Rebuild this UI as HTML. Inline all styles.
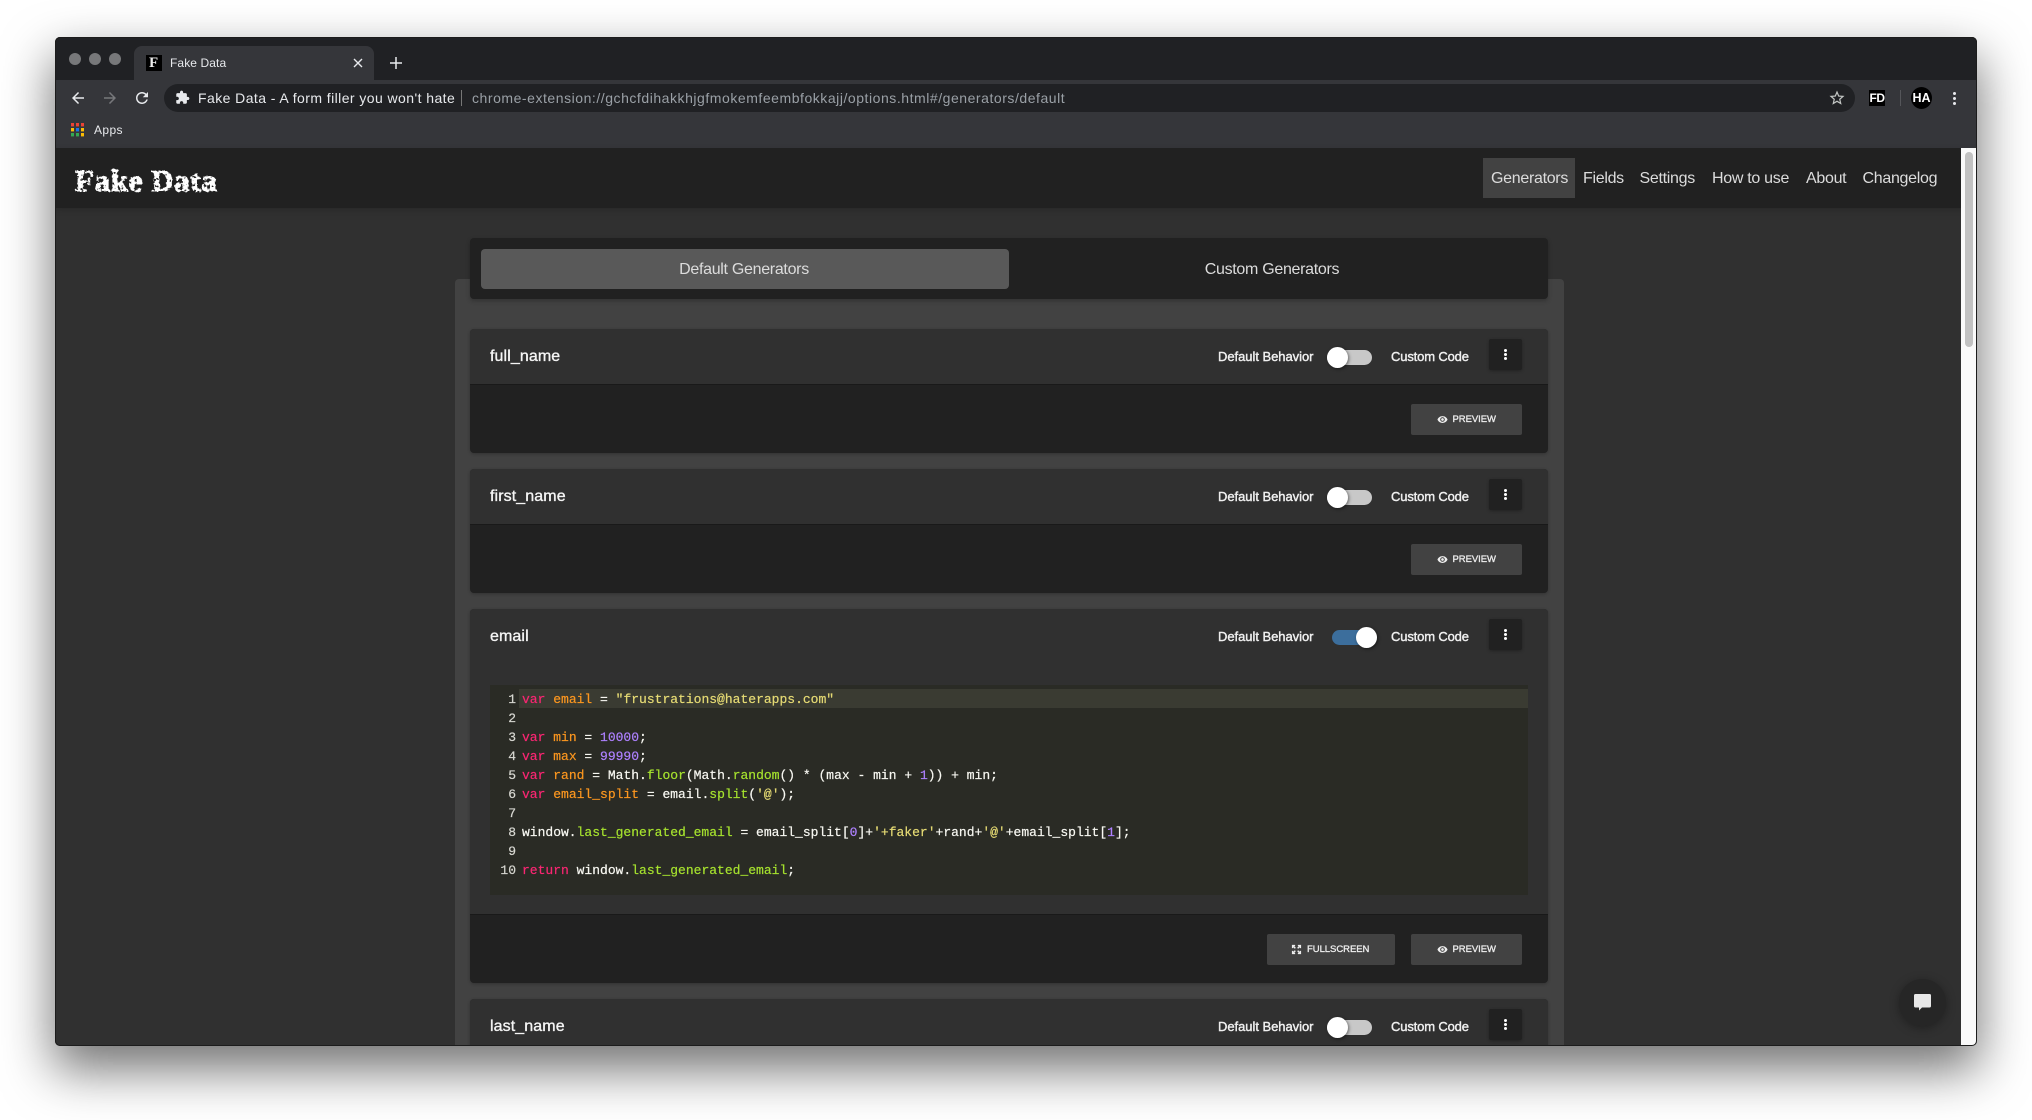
<!DOCTYPE html>
<html><head><meta charset="utf-8"><title>Fake Data</title>
<style>
html,body{margin:0;padding:0;width:2032px;height:1120px;overflow:hidden;background:#fff;font-family:"Liberation Sans",sans-serif}
.a,.a *{box-sizing:border-box}
.win{position:absolute;left:55px;top:37px;width:1922px;height:1009px;background:#303030;border-radius:5px;box-shadow:0 22px 50px 2px rgba(0,0,0,.55);overflow:hidden}
.p{position:absolute}
.t{position:absolute;white-space:nowrap;line-height:20px}
svg{position:absolute;display:block}
.nav{color:#dcdcdc;font-size:16px;letter-spacing:-.3px}
.title{color:#f5f5f5;font-size:16px;letter-spacing:.1px;left:490px;-webkit-text-stroke:.35px #f5f5f5}
.lbl{color:#f0f0f0;font-size:13px;-webkit-text-stroke:.4px #f0f0f0;letter-spacing:-.04px}
.card{position:absolute;left:470px;width:1078px;background:#212121;border-radius:4px;box-shadow:0 1px 3px rgba(0,0,0,.25)}
.head{position:absolute;left:0;top:0;width:100%;height:56px;background:#303030;border-bottom:1px solid #191919;border-radius:4px 4px 0 0}
.btn{position:absolute;background:#424242;border-radius:2px;height:31px}
.btn span{position:absolute;top:6px;color:#eee;font-size:9.500px;line-height:20px;white-space:nowrap;-webkit-text-stroke:.3px #eee;letter-spacing:-.05px}
.menu{position:absolute;left:1019px;top:10px;width:33px;height:31px;background:#212121;border-radius:2px;box-shadow:0 1px 3px rgba(0,0,0,.3)}
.menu i{position:absolute;left:15px;width:3px;height:3px;border-radius:50%;background:#fff}
.trk{position:absolute;left:857px;top:21px;width:45px;height:15px;border-radius:8px;background:#c8c8c8}
.thumb{position:absolute;left:857px;top:18px;width:21px;height:21px;border-radius:50%;background:#fff;box-shadow:1px 1px 3px rgba(0,0,0,.5)}
.code{position:absolute;left:490px;top:685px;width:1038px;height:210px;background:#2a2b25}
.ln{position:absolute;font:13px/19px "Liberation Mono",monospace;white-space:pre;color:#f8f8f2;-webkit-text-stroke:.2px}
.k{color:#f92672}.v{color:#fd971f}.s{color:#e6db74}.n{color:#ae81ff}.f{color:#a6e22e}
</style></head><body>
<svg width="0" height="0" style="left:0;top:0"><defs>
<filter id="rough" x="-5%" y="-10%" width="110%" height="120%">
<feTurbulence type="fractalNoise" baseFrequency=".32" numOctaves="2" seed="4" result="n"/>
<feDisplacementMap in="SourceGraphic" in2="n" scale="3" result="d"/>
<feColorMatrix in="n" type="matrix" values="0 0 0 0 0  0 0 0 0 0  0 0 0 0 0  -9 0 0 0 6.400" result="m"/>
<feComposite in="d" in2="m" operator="in"/>
</filter></defs></svg>
<div class="a">
<div class="win"></div>
<div class="p" style="left:55px;top:37px;width:1922px;height:1009px;overflow:hidden;border-radius:5px">
<div style="position:absolute;left:-55px;top:-37px;width:2032px;height:1120px">

<!-- tab strip -->
<div class="p" style="left:55px;top:37px;width:1923px;height:43px;background:#202124"></div>
<div class="p" style="left:69px;top:53px;width:12px;height:12px;border-radius:50%;background:#77787a"></div>
<div class="p" style="left:89px;top:53px;width:12px;height:12px;border-radius:50%;background:#77787a"></div>
<div class="p" style="left:109px;top:53px;width:12px;height:12px;border-radius:50%;background:#77787a"></div>
<div class="p" style="left:134px;top:46px;width:240px;height:34px;background:#35363a;border-radius:8px 8px 0 0"></div>
<div class="p" style="left:146px;top:55px;width:16px;height:16px;background:#000"></div>
<div class="t" style="left:149px;top:53px;font:bold 15px/20px 'Liberation Serif',serif;color:#eee">F</div>
<div class="t" style="left:170px;top:53px;font-size:12px;color:#e8eaed;letter-spacing:.1px">Fake Data</div>
<svg style="left:352px;top:57px" width="12" height="12" viewBox="0 0 12 12"><path d="M2 2l8 8M10 2l-8 8" stroke="#e8eaed" stroke-width="1.4"/></svg>
<svg style="left:390px;top:57px" width="12" height="12" viewBox="0 0 12 12"><path d="M6 0v12M0 6h12" stroke="#e8eaed" stroke-width="1.5"/></svg>

<!-- toolbar -->
<div class="p" style="left:55px;top:80px;width:1923px;height:68px;background:#35363a"></div>
<svg style="left:69px;top:89px" width="18" height="18" viewBox="0 0 24 24"><path fill="#e8eaed" d="M20 11H7.830l5.590-5.590L12 4l-8 8 8 8 1.410-1.410L7.830 13H20v-2z"/></svg>
<svg style="left:101px;top:89px" width="18" height="18" viewBox="0 0 24 24"><path fill="#77787b" d="M12 4l-1.410 1.410L16.170 11H4v2h12.170l-5.580 5.590L12 20l8-8z"/></svg>
<svg style="left:133px;top:89px" width="18" height="18" viewBox="0 0 24 24"><path fill="#e8eaed" d="M17.650 6.350C16.200 4.900 14.210 4 12 4c-4.420 0-7.990 3.580-7.990 8s3.570 8 7.990 8c3.730 0 6.840-2.550 7.730-6h-2.080c-.82 2.330-3.040 4-5.650 4-3.310 0-6-2.690-6-6s2.690-6 6-6c1.660 0 3.140.69 4.220 1.780L13 11h7V4l-2.350 2.350z"/></svg>
<div class="p" style="left:164px;top:84px;width:1691px;height:28px;border-radius:14px;background:#202124"></div>
<svg style="left:175px;top:90px" width="15" height="15" viewBox="0 0 24 24"><path fill="#e8eaed" d="M20.500 11H19V7c0-1.100-.9-2-2-2h-4V3.500C13 2.120 11.880 1 10.500 1S8 2.120 8 3.500V5H4c-1.100 0-1.990.9-1.990 2v3.800H3.500c1.490 0 2.700 1.210 2.700 2.700s-1.210 2.700-2.700 2.700H2V20c0 1.100.9 2 2 2h3.800v-1.500c0-1.490 1.210-2.700 2.700-2.700 1.490 0 2.700 1.210 2.700 2.700V22H17c1.100 0 2-.9 2-2v-4h1.500c1.380 0 2.500-1.120 2.500-2.500S21.880 11 20.500 11z"/></svg>
<div class="t" style="left:198px;top:88px;font-size:14px;color:#e8eaed;letter-spacing:.43px">Fake Data - A form filler you won't hate</div>
<div class="p" style="left:461px;top:90px;width:1px;height:16px;background:#777"></div>
<div class="t" style="left:472px;top:88px;font-size:14px;color:#9aa0a6;letter-spacing:.54px">chrome-extension://gchcfdihakkhjgfmokemfeembfokkajj/options.html#/generators/default</div>
<svg style="left:1828px;top:89px" width="18" height="18" viewBox="0 0 24 24"><path fill="#c4c7c5" d="M22 9.240l-7.190-.62L12 2 9.190 8.630 2 9.240l5.460 4.730L5.820 21 12 17.270 18.180 21l-1.630-7.030L22 9.240zM12 15.400l-3.760 2.270 1-4.280-3.320-2.880 4.380-.38L12 6.100l1.710 4.040 4.380.38-3.320 2.880 1 4.280L12 15.400z"/></svg>
<div class="p" style="left:1869px;top:90px;width:16px;height:16px;background:#000"></div>
<div class="t" style="left:1869px;top:88px;width:16px;text-align:center;font:bold 12px/20px 'Liberation Sans',sans-serif;color:#fff;letter-spacing:-.5px">FD</div>
<div class="p" style="left:1900px;top:90px;width:1px;height:16px;background:#55565a"></div>
<div class="p" style="left:1911px;top:87px;width:21px;height:22px;border-radius:50%;background:#000"></div>
<div class="t" style="left:1911px;top:88px;width:21px;text-align:center;font:bold 12.500px/20px 'Liberation Sans',sans-serif;color:#fff">HA</div>
<div class="p" style="left:1953px;top:92px;width:3px;height:3px;border-radius:50%;background:#e8eaed"></div>
<div class="p" style="left:1953px;top:97px;width:3px;height:3px;border-radius:50%;background:#e8eaed"></div>
<div class="p" style="left:1953px;top:102px;width:3px;height:3px;border-radius:50%;background:#e8eaed"></div>

<!-- bookmarks -->
<svg style="left:71px;top:123px" width="13" height="14" viewBox="0 0 13 14">
<rect x="0" y="0" width="3" height="3.400" fill="#ea4335"/><rect x="5" y="0" width="3" height="3.400" fill="#ea4335"/><rect x="10" y="0" width="3" height="3.400" fill="#ea4335"/>
<rect x="0" y="5" width="3" height="3.400" fill="#fbbc04"/><rect x="5" y="5" width="3" height="3.400" fill="#1a73e8"/><rect x="10" y="5" width="3" height="3.400" fill="#fbbc04"/>
<rect x="0" y="10" width="3" height="3.400" fill="#34a853"/><rect x="5" y="10" width="3" height="3.400" fill="#34a853"/><rect x="10" y="10" width="3" height="3.400" fill="#fbbc04"/>
</svg>
<div class="t" style="left:94px;top:120px;font-size:12px;color:#e8eaed;letter-spacing:.4px">Apps</div>

<!-- app header -->
<div class="p" style="left:55px;top:148px;width:1923px;height:60px;background:#212121;box-shadow:0 2px 6px rgba(0,0,0,.15)"></div>
<div class="t" style="left:75px;top:166px;font:bold 31px/30px 'Liberation Serif',serif;color:#fff;letter-spacing:.6px;-webkit-text-stroke:1px #fff;filter:url(#rough)">Fake Data</div>
<div class="p" style="left:1483px;top:158px;width:92px;height:40px;background:#424242"></div>
<div class="t nav" style="left:1491px;top:168.500px">Generators</div>
<div class="t nav" style="left:1583px;top:168.500px">Fields</div>
<div class="t nav" style="left:1639.500px;top:168.500px">Settings</div>
<div class="t nav" style="left:1712px;top:168.500px">How to use</div>
<div class="t nav" style="left:1806px;top:168.500px">About</div>
<div class="t nav" style="left:1862.500px;top:168.500px">Changelog</div>

<!-- scrollbar -->
<div class="p" style="left:1961px;top:148px;width:16px;height:898px;background:#fafafa"></div>
<div class="p" style="left:1965px;top:152px;width:8px;height:195px;border-radius:4px;background:#c2c2c2"></div>

<!-- panel -->
<div class="p" style="left:455px;top:279px;width:1109px;height:780px;background:#424242;border-radius:4px 4px 0 0"></div>
<div class="p" style="left:470px;top:238px;width:1078px;height:61px;background:#212121;border-radius:4px;box-shadow:0 2px 5px rgba(0,0,0,.25)"></div>
<div class="p" style="left:481px;top:249px;width:528px;height:40px;background:#595959;border-radius:4px"></div>
<div class="t" style="left:480px;top:260px;width:528px;text-align:center;font-size:16px;color:#dcdcdc;letter-spacing:-.3px">Default Generators</div>
<div class="t" style="left:1008px;top:260px;width:528px;text-align:center;font-size:16px;color:#dcdcdc;letter-spacing:-.3px">Custom Generators</div>

<!-- card 1 -->
<div class="card" style="top:329px;height:124px">
 <div class="head"></div>
 <div class="menu"><i style="top:10px"></i><i style="top:14px"></i><i style="top:18px"></i></div>
 <div class="trk"></div><div class="thumb"></div>
 <div class="btn" style="left:941px;top:75px;width:111px"><svg style="left:26px;top:10px" width="11" height="11" viewBox="0 0 24 24"><path fill="#eee" d="M12 4.500C7 4.500 2.730 7.610 1 12c1.730 4.390 6 7.500 11 7.500s9.270-3.110 11-7.500c-1.730-4.390-6-7.500-11-7.500zM12 17c-2.760 0-5-2.240-5-5s2.240-5 5-5 5 2.240 5 5-2.240 5-5 5zm0-8c-1.660 0-3 1.340-3 3s1.340 3 3 3 3-1.340 3-3-1.340-3-3-3z"/></svg><span style="left:41.500px">PREVIEW</span></div>
</div>
<div class="t title" style="top:347px">full_name</div>
<div class="t lbl" style="left:1218px;top:347px">Default Behavior</div>
<div class="t lbl" style="left:1391px;top:347px;letter-spacing:-.15px">Custom Code</div>

<!-- card 2 -->
<div class="card" style="top:469px;height:124px">
 <div class="head"></div>
 <div class="menu"><i style="top:10px"></i><i style="top:14px"></i><i style="top:18px"></i></div>
 <div class="trk"></div><div class="thumb"></div>
 <div class="btn" style="left:941px;top:75px;width:111px"><svg style="left:26px;top:10px" width="11" height="11" viewBox="0 0 24 24"><path fill="#eee" d="M12 4.500C7 4.500 2.730 7.610 1 12c1.730 4.390 6 7.500 11 7.500s9.270-3.110 11-7.500c-1.730-4.390-6-7.500-11-7.500zM12 17c-2.760 0-5-2.240-5-5s2.240-5 5-5 5 2.240 5 5-2.240 5-5 5zm0-8c-1.660 0-3 1.340-3 3s1.340 3 3 3 3-1.340 3-3-1.340-3-3-3z"/></svg><span style="left:41.500px">PREVIEW</span></div>
</div>
<div class="t title" style="top:487px">first_name</div>
<div class="t lbl" style="left:1218px;top:487px">Default Behavior</div>
<div class="t lbl" style="left:1391px;top:487px;letter-spacing:-.15px">Custom Code</div>

<!-- card 3 -->
<div class="card" style="top:609px;height:374px">
 <div class="head" style="height:306px"></div>
 <div class="menu"><i style="top:10px"></i><i style="top:14px"></i><i style="top:18px"></i></div>
 <div class="trk" style="left:862px;background:#3c6e9c"></div><div class="thumb" style="left:886px"></div>
 <div class="btn" style="left:797px;top:325px;width:128px"><svg style="left:24px;top:10px" width="11" height="11" viewBox="0 0 24 24"><path fill="none" stroke="#eee" stroke-width="3" d="M5 5l14 14M19 5L5 19"/><path fill="#eee" d="M2 2h7v3H5v4H2zM22 2v7h-3V5h-4V2zM2 22v-7h3v4h4v3zM22 22h-7v-3h4v-4h3z"/><circle cx="12" cy="12" r="3.500" fill="#424242"/></svg><span style="left:40px">FULLSCREEN</span></div>
 <div class="btn" style="left:941px;top:325px;width:111px"><svg style="left:26px;top:10px" width="11" height="11" viewBox="0 0 24 24"><path fill="#eee" d="M12 4.500C7 4.500 2.730 7.610 1 12c1.730 4.390 6 7.500 11 7.500s9.270-3.110 11-7.500c-1.730-4.390-6-7.500-11-7.500zM12 17c-2.760 0-5-2.240-5-5s2.240-5 5-5 5 2.240 5 5-2.240 5-5 5zm0-8c-1.660 0-3 1.340-3 3s1.340 3 3 3 3-1.340 3-3-1.340-3-3-3z"/></svg><span style="left:41.500px">PREVIEW</span></div>
</div>
<div class="t title" style="top:627px">email</div>
<div class="t lbl" style="left:1218px;top:627px">Default Behavior</div>
<div class="t lbl" style="left:1391px;top:627px;letter-spacing:-.15px">Custom Code</div>

<div class="code"></div>
<div class="p" style="left:519px;top:689px;width:1009px;height:19px;background:#3a3b32"></div>
<div class="ln" style="left:491px;top:690px;width:25px;text-align:right;color:#d8d8d2">1
2
3
4
5
6
7
8
9
10</div>
<div class="ln" style="left:522px;top:690px"><span class="k">var</span> <span class="v">email</span> = <span class="s">"frustrations@haterapps.com"</span>

<span class="k">var</span> <span class="v">min</span> = <span class="n">10000</span>;
<span class="k">var</span> <span class="v">max</span> = <span class="n">99990</span>;
<span class="k">var</span> <span class="v">rand</span> = Math.<span class="f">floor</span>(Math.<span class="f">random</span>() * (max - min + <span class="n">1</span>)) + min;
<span class="k">var</span> <span class="v">email_split</span> = email.<span class="f">split</span>(<span class="s">'@'</span>);

window.<span class="f">last_generated_email</span> = email_split[<span class="n">0</span>]+<span class="s">'+faker'</span>+rand+<span class="s">'@'</span>+email_split[<span class="n">1</span>];

<span class="k">return</span> window.<span class="f">last_generated_email</span>;</div>

<!-- card 4 -->
<div class="card" style="top:999px;height:124px">
 <div class="head"></div>
 <div class="menu"><i style="top:10px"></i><i style="top:14px"></i><i style="top:18px"></i></div>
 <div class="trk"></div><div class="thumb"></div>
</div>
<div class="t title" style="top:1017px">last_name</div>
<div class="t lbl" style="left:1218px;top:1017px">Default Behavior</div>
<div class="t lbl" style="left:1391px;top:1017px;letter-spacing:-.15px">Custom Code</div>

<!-- chat -->
<div class="p" style="left:1899px;top:979px;width:47px;height:47px;border-radius:50%;background:#262626;box-shadow:0 2px 10px rgba(0,0,0,.35)"></div>
<svg style="left:1914px;top:994px" width="17" height="17" viewBox="0 0 17 17"><path fill="#e8e8e8" d="M1.500 0h14A1.500 1.500 0 0 1 17 1.500V12a1.500 1.500 0 0 1-1.500 1.500H8L5 16.500v-3H1.500A1.500 1.500 0 0 1 0 12V1.500A1.500 1.500 0 0 1 1.500 0z"/></svg>

</div></div>
<div class="p" style="left:55px;top:37px;width:1922px;height:1009px;border-radius:5px;box-shadow:inset 0 0 0 1px #1c1c1c"></div>
</div>
</body></html>
